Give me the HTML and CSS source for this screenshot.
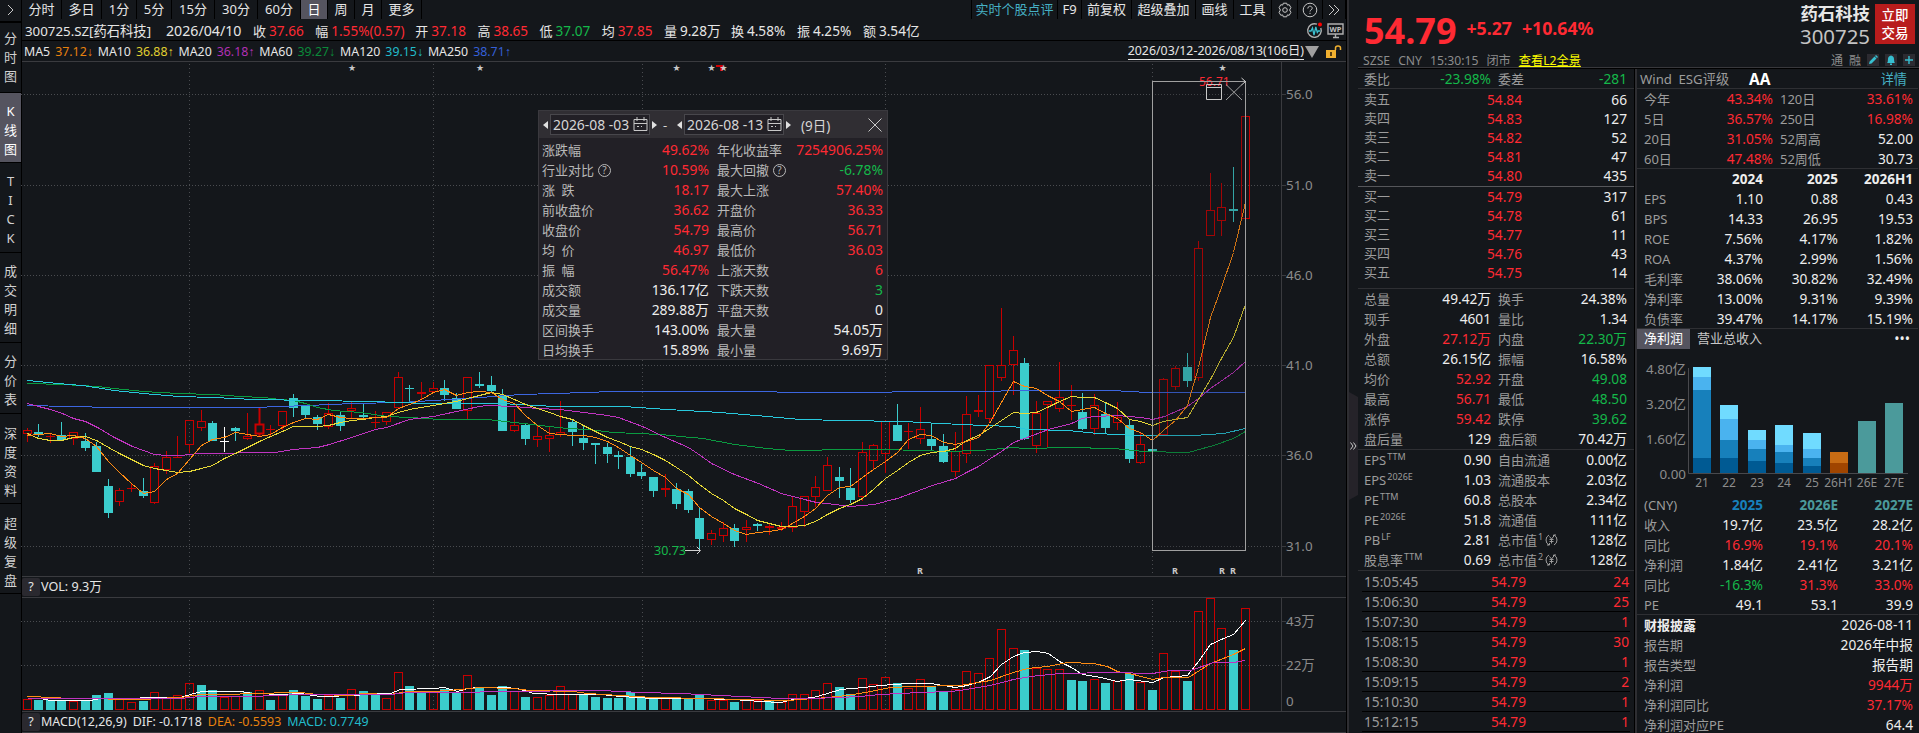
FILE: index.html
```html
<!DOCTYPE html>
<html lang="zh-CN">
<head>
    <meta charset="UTF-8">
    <title>药石科技 300725</title>
    <link rel="stylesheet" href="styles.css">
</head>
<body>
    <div class="app">
        <nav class="sidebar">
            <div class="side-toggle"><svg width="8" height="14" viewBox="0 0 8 14"><path d="M1 2l5 5-5 5"/></svg></div>
            <div class="side-tab">分<br>时<br>图</div>
            <div class="side-tab active">K<br>线<br>图</div>
            <div class="side-tab">T<br>I<br>C<br>K</div>
            <div class="side-tab">成<br>交<br>明<br>细</div>
            <div class="side-tab">分<br>价<br>表</div>
            <div class="side-tab">深<br>度<br>资<br>料</div>
            <div class="side-tab">超<br>级<br>复<br>盘</div>
        </nav>

        <main class="main">
            <div class="toolbar">
                <div class="periods">
                    <span class="w41">分时</span><span class="w40">多日</span><span class="w35">1分</span><span class="w35">5分</span><span class="w43">15分</span><span class="w43">30分</span><span class="w43">60分</span><span class="w27 active">日</span><span class="w27">周</span><span class="w27">月</span><span class="w40">更多</span>
                </div>
                <div class="tools">
                    <span class="w87 link">实时个股点评</span><span class="w24">F9</span><span class="w50">前复权</span><span class="w64">超级叠加</span><span class="w38">画线</span><span class="w38">工具</span>
                    <span class="w26"><svg width="16" height="16" viewBox="0 0 16 16"><path d="M6.300 1.200h3.400l.6 1.900 1.900-.4 1.700 2.900L12.600 8l1.300 2.400-1.700 2.900-1.900-.4-.6 1.900H6.300l-.6-1.900-1.900.4-1.700-2.900L3.400 8 2.100 5.600l1.700-2.900 1.900.4z"/><circle cx="8" cy="8" r="2.300"/></svg></span>
                    <span class="w25"><svg width="16" height="16" viewBox="0 0 16 16"><circle cx="8" cy="8" r="6.800"/><path d="M5.800 6.500c0-3 4.400-3 4.400-.2 0 1.500-2.200 1.600-2.200 3.200M8 10.800v1.200"/></svg></span>
                    <span class="w23"><svg width="12" height="12" viewBox="0 0 12 12"><path d="M1 1l5 5-5 5M6 1l5 5-5 5"/></svg></span>
                </div>
            </div>

            <div class="info">
                <span class="code">300725.SZ[药石科技]</span>
                <span class="date">2026/04/10</span>
                <span class="q">收<b class="up">37.66</b></span>
                <span class="q wide">幅<b class="up">1.55%(0.57)</b></span>
                <span class="q">开<b class="up">37.18</b></span>
                <span class="q">高<b class="up">38.65</b></span>
                <span class="q">低<b class="down">37.07</b></span>
                <span class="q">均<b class="up">37.85</b></span>
                <span class="q w67">量<b>9.28万</b></span>
                <span class="q w66">换<b>4.58%</b></span>
                <span class="q w66">振<b>4.25%</b></span>
                <span class="q">额<b>3.54亿</b></span>
                <div class="info-icons">
                    <svg width="17" height="17" viewBox="0 0 17 17"><path class="grey" d="M11 2.200A6.800 6.800 0 1 0 14.800 6"/><path class="pulse" d="M3 9h2l1.500-3 1.500 7 1.800-8 1.500 5.500 1-1.500h2"/><circle class="dot" cx="14" cy="2.500" r="2"/></svg>
                    <svg width="17" height="17" viewBox="0 0 17 17"><path class="grey" d="M1 2h15v10H1zM6 15.500h6M8.500 12v3"/><text x="8.500" y="10" text-anchor="middle">WP</text></svg>
                </div>
            </div>

            <div class="ma">
                <span>MA5</span><span class="c-orange">37.12<i>↓</i></span>
                <span>MA10</span><span class="c-yellow">36.88<i>↑</i></span>
                <span>MA20</span><span class="c-magenta">36.18<i>↑</i></span>
                <span>MA60</span><span class="c-green">39.27<i>↓</i></span>
                <span>MA120</span><span class="c-cyan">39.15<i>↓</i></span>
                <span>MA250</span><span class="c-blue">38.71<i>↑</i></span>
                <div class="range">
                    <u>2026/03/12-2026/08/13(106日)</u>
                    <svg width="14" height="14" viewBox="0 0 14 14"><path class="tri" d="M0 1h14L7 13z"/></svg>
                    <svg class="lock" width="16" height="14" viewBox="0 0 16 14"><path class="lock-body" d="M0 5h10v8H0z"/><path class="lock-ring" d="M9.500 5V3q0-2 2.500-2t2.500 2v2"/><path class="lock-hole" d="M4 7h2v4H4z"/></svg>
                </div>
            </div>

            <svg id="kchart" class="kchart" viewBox="21 62 1325 514"></svg>

            <div class="sub-head"><span class="help">?</span>VOL: 9.3万</div>
            <svg id="vchart" class="vchart" viewBox="21 598 1325 113"></svg>
            <div class="sub-head macd"><span class="help">?</span>MACD(12,26,9)<span>DIF: -0.1718</span><span class="c-orange">DEA: -0.5593</span><span class="c-cyan">MACD: 0.7749</span></div>

            <div class="popup">
                <div class="popup-head">
                    <em class="tri-l"></em>
                    <span class="date-box">2026-08 -03<svg width="15" height="15" viewBox="0 0 15 15"><path d="M1 2.500h13v11H1zM1 6.500h13M4 0v4M11 0v4M4 9.500h2M8 9.500h1"/></svg></span>
                    <em class="tri-r"></em>
                    <span class="dash">-</span>
                    <em class="tri-l"></em>
                    <span class="date-box">2026-08 -13<svg width="15" height="15" viewBox="0 0 15 15"><path d="M1 2.500h13v11H1zM1 6.500h13M4 0v4M11 0v4M4 9.500h2M8 9.500h1"/></svg></span>
                    <em class="tri-r"></em>
                    <span class="days">(9日)</span>
                    <svg class="close" width="14" height="14" viewBox="0 0 14 14"><path d="M.5.5l13 13M13.500.5l-13 13"/></svg>
                </div>
                <div class="stats">
                    <span>涨跌幅</span><b class="up">49.62%</b><span>年化收益率</span><b class="up">7254906.25%</b>
                    <span>行业对比<i class="tip">?</i></span><b class="up">10.59%</b><span>最大回撤<i class="tip">?</i></span><b class="down">-6.78%</b>
                    <span>涨&ensp;跌</span><b class="up">18.17</b><span>最大上涨</span><b class="up">57.40%</b>
                    <span>前收盘价</span><b class="up">36.62</b><span>开盘价</span><b class="up">36.33</b>
                    <span>收盘价</span><b class="up">54.79</b><span>最高价</span><b class="up">56.71</b>
                    <span>均&ensp;价</span><b class="up">46.97</b><span>最低价</span><b class="up">36.03</b>
                    <span>振&ensp;幅</span><b class="up">56.47%</b><span>上涨天数</span><b class="up">6</b>
                    <span>成交额</span><b>136.17亿</b><span>下跌天数</span><b class="down">3</b>
                    <span>成交量</span><b>289.88万</b><span>平盘天数</span><b>0</b>
                    <span>区间换手</span><b>143.00%</b><span>最大量</span><b>54.05万</b>
                    <span>日均换手</span><b>15.89%</b><span>最小量</span><b>9.69万</b>
                </div>
            </div>
        </main>

        <div class="gutter"><div class="handle"><svg width="7" height="8" viewBox="0 0 7 8"><path d="M.5.5L3 4 .5 7.500M3.500.5L6 4 3.500 7.500"/></svg></div></div>

        <aside class="quote">
            <header class="quote-head">
                <div class="head-left">
                    <div class="price"><strong>54.79</strong><b>+5.27</b><b>+10.64%</b></div>
                    <div class="market"><span>SZSE</span><span>CNY</span><span>15:30:15</span><span>闭市</span><u>查看L2全景</u></div>
                </div>
                <div class="head-right">
                    <div class="name-row">
                        <div class="name"><strong>药石科技</strong><span>300725</span></div>
                        <div class="trade">立即<br>交易</div>
                    </div>
                    <div class="badges">
                        <span>通</span><span>融</span>
                        <svg width="12" height="12" viewBox="0 0 12 12"><path d="M2 10l.6-2.500L7.500 2.600l2 2L4.500 9.500zM8 2l1-1 2 2-1 1z"/></svg>
                        <svg width="12" height="12" viewBox="0 0 12 12"><path d="M2 9q1-1 1-4 0-3 3-3.500Q9 2 9 5q0 3 1 4zM5 9.500h2v1.500H5z"/></svg>
                        <svg width="12" height="12" viewBox="0 0 12 12"><path d="M5.300 2h1.400v3.300H10v1.400H6.700V10H5.300V6.700H2V5.300h3.300z"/></svg>
                    </div>
                </div>
            </header>

            <div class="panels">
                <section class="panel depth">
                    <div class="pairs ratio"><span>委比</span><b class="down">-23.98%</b><span>委差</span><b class="down">-281</b></div>
                    <div class="book sell">
                        <span>卖五</span><b class="up">54.84</b><b>66</b>
                        <span>卖四</span><b class="up">54.83</b><b>127</b>
                        <span>卖三</span><b class="up">54.82</b><b>52</b>
                        <span>卖二</span><b class="up">54.81</b><b>47</b>
                        <span>卖一</span><b class="up">54.80</b><b>435</b>
                    </div>
                    <div class="book buy">
                        <span>买一</span><b class="up">54.79</b><b>317</b>
                        <span>买二</span><b class="up">54.78</b><b>61</b>
                        <span>买三</span><b class="up">54.77</b><b>11</b>
                        <span>买四</span><b class="up">54.76</b><b>43</b>
                        <span>买五</span><b class="up">54.75</b><b>14</b>
                    </div>
                    <div class="pairs">
                        <span>总量</span><b>49.42万</b><span>换手</span><b>24.38%</b>
                        <span>现手</span><b>4601</b><span>量比</span><b>1.34</b>
                        <span>外盘</span><b class="up">27.12万</b><span>内盘</span><b class="down">22.30万</b>
                        <span>总额</span><b>26.15亿</b><span>振幅</span><b>16.58%</b>
                        <span>均价</span><b class="up">52.92</b><span>开盘</span><b class="down">49.08</b>
                        <span>最高</span><b class="up">56.71</b><span>最低</span><b class="down">48.50</b>
                        <span>涨停</span><b class="up">59.42</b><span>跌停</span><b class="down">39.62</b>
                        <span>盘后量</span><b>129</b><span>盘后额</span><b>70.42万</b>
                    </div>
                    <div class="pairs">
                        <span>EPS<sup>TTM</sup></span><b>0.90</b><span>自由流通</span><b>0.00亿</b>
                        <span>EPS<sup>2026E</sup></span><b>1.03</b><span>流通股本</span><b>2.03亿</b>
                        <span>PE<sup>TTM</sup></span><b>60.8</b><span>总股本</span><b>2.34亿</b>
                        <span>PE<sup>2026E</sup></span><b>51.8</b><span>流通值</span><b>111亿</b>
                        <span>PB<sup>LF</sup></span><b>2.81</b><span>总市值<sup>1</sup><svg width="13" height="12" viewBox="0 0 13 12"><path d="M4 1Q1 2.500 1 6t3 5M2 11h2.500V9M9 11q3-1.500 3-5T9 1M11 1H8.500v2M4.500 2.500l2 2.500 2-2.500M6.500 5v4.500M4.500 5.500h4M4.500 7.500h4"/></svg></span><b>128亿</b>
                        <span>股息率<sup>TTM</sup></span><b>0.69</b><span>总市值<sup>2</sup><svg width="13" height="12" viewBox="0 0 13 12"><path d="M4 1Q1 2.500 1 6t3 5M2 11h2.500V9M9 11q3-1.500 3-5T9 1M11 1H8.500v2M4.500 2.500l2 2.500 2-2.500M6.500 5v4.500M4.500 5.500h4M4.500 7.500h4"/></svg></span><b>128亿</b>
                    </div>
                    <div class="ticks">
                        <div><span>15:05:45</span><b>54.79</b><b>24</b></div>
                        <div><span>15:06:30</span><b>54.79</b><b>25</b></div>
                        <div><span>15:07:30</span><b>54.79</b><b>1</b></div>
                        <div class="same"><span>15:08:15</span><b>54.79</b><b>30</b></div>
                        <div><span>15:08:30</span><b>54.79</b><b>1</b></div>
                        <div><span>15:09:15</span><b>54.79</b><b>2</b></div>
                        <div><span>15:10:30</span><b>54.79</b><b>1</b></div>
                        <div><span>15:12:15</span><b>54.79</b><b>1</b></div>
                    </div>
                </section>

                <section class="panel finance">
                    <div class="esg"><span>Wind&ensp;ESG评级</span><strong>AA</strong><a>详情</a></div>
                    <div class="pairs returns">
                        <span>今年</span><b class="up">43.34%</b><span>120日</span><b class="up">33.61%</b>
                        <span>5日</span><b class="up">36.57%</b><span>250日</span><b class="up">16.98%</b>
                        <span>20日</span><b class="up">31.05%</b><span>52周高</span><b>52.00</b>
                        <span>60日</span><b class="up">47.48%</b><span>52周低</span><b>30.73</b>
                    </div>
                    <div class="fin ratios">
                        <span></span><strong>2024</strong><strong>2025</strong><strong>2026H1</strong>
                        <span>EPS</span><b>1.10</b><b>0.88</b><b>0.43</b>
                        <span>BPS</span><b>14.33</b><b>26.95</b><b>19.53</b>
                        <span>ROE</span><b>7.56%</b><b>4.17%</b><b>1.82%</b>
                        <span>ROA</span><b>4.37%</b><b>2.99%</b><b>1.56%</b>
                        <span>毛利率</span><b>38.06%</b><b>30.82%</b><b>32.49%</b>
                        <span>净利率</span><b>13.00%</b><b>9.31%</b><b>9.39%</b>
                        <span>负债率</span><b>39.47%</b><b>14.17%</b><b>15.19%</b>
                    </div>
                    <div class="tabs"><span class="active">净利润</span><span>营业总收入</span><em>•••</em></div>
                    <svg id="profit" class="profit" viewBox="1637 349 281 146"></svg>
                    <div class="fin forecast">
                        <span>(CNY)</span><strong class="y1">2025</strong><strong class="y2">2026E</strong><strong class="y2">2027E</strong>
                        <span>收入</span><b>19.7亿</b><b>23.5亿</b><b>28.2亿</b>
                        <span>同比</span><b class="up">16.9%</b><b class="up">19.1%</b><b class="up">20.1%</b>
                        <span>净利润</span><b>1.84亿</b><b>2.41亿</b><b>3.21亿</b>
                        <span>同比</span><b class="down">-16.3%</b><b class="up">31.3%</b><b class="up">33.0%</b>
                        <span>PE</span><b>49.1</b><b>53.1</b><b>39.9</b>
                    </div>
                    <div class="report">
                        <strong>财报披露</strong><b>2026-08-11</b>
                        <span>报告期</span><b>2026年中报</b>
                        <span>报告类型</span><b>报告期</b>
                        <span>净利润</span><b class="up">9944万</b>
                        <span>净利润同比</span><b class="up">37.17%</b>
                        <span>净利润对应PE</span><b>64.4</b>
                    </div>
                </section>
            </div>
        </aside>
    </div>
    <script src="chart.js"></script>
</body>
</html>
```
FILE: styles.css
```css
* {
    box-sizing: border-box;
}
body {
    margin: 0;
    background: #14171b;
    color: #e6e6e6;
    font-family: "Noto Sans", "Noto Sans CJK SC", sans-serif;
    font-size: 13px;
    overflow: hidden;
}
b, i, em {
    font-weight: normal;
    font-style: normal;
}
svg {
    display: block;
    fill: none;
    stroke: #c8c8c8;
}
.up { color: #ff2a33; }
.down { color: #14b84a; }
.c-orange { color: #e8820e; }
.c-yellow { color: #e0d030; }
.c-magenta { color: #b030b4; }
.c-green { color: #0b8a3a; }
.c-cyan { color: #22bccb; }
.c-blue { color: #3560d8; }

.app {
    display: flex;
    width: 1919px;
    height: 733px;
}

/* left tabs */
.sidebar {
    width: 22px;
    border-right: 1px solid #000;
    text-align: center;
    line-height: 19px;
    color: #d2d2d2;
}
.side-toggle {
    height: 23px;
    padding: 3px 0 0 7px;
    border-bottom: 2px solid #000;
}
.side-tab {
    padding: 6px 0 12px;
    height: 70px;
    border-bottom: 1px solid #000;
    line-height: 19px;
}
.side-tab:nth-child(n+4) {
    height: 90px;
    padding-top: 9px;
}
.side-tab:nth-child(6) {
    height: 71px;
}
.side-tab:nth-child(n+7) {
    padding-top: 10px;
}
.side-tab.active {
    background: #55545f;
    color: #fff;
    padding-top: 9px;
}

/* main column */
.main {
    position: relative;
    width: 1325px;
    display: flex;
    flex-direction: column;
    border-right: 1px solid #000;
}
.toolbar {
    display: flex;
    justify-content: space-between;
    height: 19px;
}
.periods, .tools {
    display: flex;
}
.periods span, .tools span {
    display: flex;
    align-items: center;
    justify-content: center;
    height: 19px;
    line-height: 19px;
    border-right: 1px solid #000;
}
.tools span:first-child {
    border-left: 1px solid #000;
}
.tools .link { color: #46b0c4; }
.periods .active {
    background: #55545f;
    color: #fff;
}
.w23 { width: 23px; }
.w24 { width: 24px; }
.w25 { width: 25px; }
.w26 { width: 26px; }
.w27 { width: 27px; }
.w35 { width: 35px; }
.w38 { width: 38px; }
.w40 { width: 40px; }
.w41 { width: 40px; }
.w43 { width: 43px; }
.w50 { width: 50px; }
.w64 { width: 64px; }
.w87 { width: 87px; }

.info {
    display: flex;
    height: 22px;
    padding-left: 3px;
    line-height: 24px;
    border-bottom: 1px solid #000;
    white-space: nowrap;
}
.info .code { width: 141px; font-size: 13.3px; }
.info .date { width: 87px; font-size: 14.2px; }
.info .q { width: 62.2px; }
.info .q.wide { width: 100px; }
.info .q.w67 { width: 67px; }
.info .q.w66 { width: 66px; }
.info .q b {
    margin-left: 3px;
    font-size: 13.6px;
}
.info-icons {
    display: flex;
    gap: 4px;
    margin-left: auto;
    padding: 3px 2px 0 0;
}
.info-icons .grey { stroke: #b0b0b0; stroke-width: 1.4; }
.info-icons .pulse { stroke: #3cc0d0; stroke-width: 1.3; }
.info-icons .dot { fill: #f00; stroke: none; }
.info-icons text {
    fill: #c0c0c0;
    stroke: none;
    font-size: 7.5px;
    font-weight: bold;
}

.ma {
    display: flex;
    align-items: center;
    height: 21px;
    padding: 1px 0 0 2px;
    font-size: 12.35px;
    line-height: 20px;
    border-bottom: 1px solid #3a3b3f;
}
.ma > span { margin-right: 5px; }
.ma i {
    display: inline-block;
    width: 6px;
    font-family: "Liberation Sans", sans-serif;
}
.ma .range {
    display: flex;
    align-items: center;
    margin-left: auto;
    padding-right: 4px;
}
.ma u {
    font-size: 12.35px;
    line-height: 16px;
    text-decoration: none;
    border-bottom: 1px solid #e6e6e6;
    margin-right: 1px;
}
.tri { fill: #a0a0a0; stroke: none; }
.lock { margin-left: 7px; }
.lock-body { fill: #f0b030; stroke: none; }
.lock-ring { stroke: #f0b030; stroke-width: 1.5; }
.lock-hole { fill: #5a4010; stroke: none; }

.kchart { width: 1325px; height: 514px; margin-left: -1px; }
.vchart { width: 1325px; height: 113px; margin-left: -1px; }
.kchart text, .vchart text, .profit text {
    stroke: none;
    fill: #8c8c8c;
    font-size: 13.4px;
}
.kchart text.mark { fill: #c8c8c8; font-size: 9px; font-weight: bold; }
.kchart text.star { fill: #c8c8c8; font-size: 9px; font-family: "DejaVu Sans", sans-serif; }
.kchart text.high { fill: #ff2a33; font-size: 12px; }
.kchart text.low { fill: #14b84a; font-size: 12.5px; }
.sub-head {
    display: flex;
    align-items: center;
    height: 22px;
    border-top: 1px solid #3a3b3f;
    border-bottom: 1px solid #3a3b3f;
    font-size: 12.6px;
    line-height: 20px;
}
.macd { font-size: 12.45px; }
.sub-head > span:not(.help) { margin-left: 6px; }
.help {
    width: 18px;
    height: 18px;
    margin: 0 1px 0 0;
    line-height: 18px;
    background: #2a292f;
    text-align: center;
    border-radius: 2px;
}

/* interval statistics window */
.popup {
    position: absolute;
    left: 516px;
    top: 110px;
    width: 350px;
    height: 250px;
    background: #222026;
    border: 1px solid #3a393e;
}
.popup-head {
    display: flex;
    align-items: center;
    height: 27px;
    padding-left: 4px;
    background: #302e33;
    color: #d6d6d6;
}
.date-box {
    display: flex;
    align-items: center;
    width: 100px;
    height: 21px;
    margin: 0 2px;
    padding-left: 2px;
    border: 1px solid #48474c;
    background: #222026;
    font-size: 13.9px;
    white-space: nowrap;
}
.date-box svg { margin-left: auto; margin-right: 1px; }
.tri-l, .tri-r {
    border: 4px solid transparent;
    border-width: 4px 5px;
}
.tri-l { border-right-color: #e0e0e0; border-left-width: 0; }
.tri-r { border-left-color: #e0e0e0; border-right-width: 0; }
.dash { width: 20px; padding-left: 6px; }
.days { margin-left: 10px; font-size: 13.5px; }
.close { margin-left: auto; margin-right: 5px; }
.stats {
    display: grid;
    grid-template-columns: 90px 77px 67px 1fr;
    grid-auto-rows: 20px;
    padding: 2px 4px 0 3px;
    line-height: 20px;
    color: #b8b8b8;
    white-space: nowrap;
}
.stats b {
    font-size: 13.9px;
    text-align: right;
}
.stats span:nth-child(4n+3) { padding-left: 8px; }
.stats b:not(.up):not(.down) { color: #eee; }
.tip {
    display: inline-block;
    width: 13px;
    height: 13px;
    margin-left: 4px;
    border: 1px solid #b8b8b8;
    border-radius: 50%;
    font-size: 10px;
    line-height: 11px;
    text-align: center;
    vertical-align: 1px;
}

/* strip with the collapse handle */
.gutter {
    width: 11px;
    padding-top: 392px;
    border-left: 2px solid #2e2e32;
}
.handle {
    display: flex;
    align-items: center;
    justify-content: center;
    height: 108px;
    background: #252329;
    clip-path: polygon(0 0, 100% 5px, 100% 103px, 0 100%);
}

/* quote side */
.quote {
    width: 561px;
}
.quote-head {
    display: flex;
    justify-content: space-between;
    height: 69px;
    border-bottom: 1px solid #000;
    box-shadow: inset 0 -1px #38383c;
}
.price {
    display: flex;
    align-items: center;
    height: 52px;
    padding: 9px 0 0 6px;
    color: #ff2a33;
}
.price strong { font-size: 36px; line-height: 40px; }
.price b { margin: -5px 0 0 10px; font-size: 17.7px; font-weight: bold; }
.market {
    display: flex;
    gap: 8px;
    padding-left: 5px;
    color: #8c8c8c;
    font-size: 12.2px;
    line-height: 17px;
}
.market u { color: #ff0; }
.name-row {
    display: flex;
    justify-content: flex-end;
    height: 51px;
    padding: 3px 4px 0 0;
}
.name {
    display: flex;
    flex-direction: column;
    align-items: flex-end;
    margin-right: 5px;
}
.name strong { font-size: 17.4px; line-height: 21px; }
.name span { font-size: 20.4px; line-height: 25px; color: #c4c4c4; }
.trade {
    width: 40px;
    height: 40px;
    margin-top: 1px;
    padding-top: 2px;
    background: #b81c1c;
    color: #fff;
    font-size: 13.5px;
    font-weight: 500;
    line-height: 18px;
    text-align: center;
}
.badges {
    display: flex;
    justify-content: flex-end;
    gap: 6px;
    padding: 3px 4px 0 0;
    font-size: 12px;
    line-height: 14px;
    color: #8c8c8c;
}
.badges svg { background: #2c2b31; fill: #36bfd0; stroke: none; }

.panels {
    display: flex;
    height: 664px;
}
.panel {
    line-height: 20px;
    color: #9c9c9c;
    white-space: nowrap;
}
.panel b {
    font-size: 13.7px;
    text-align: right;
}
.panel b:not(.up):not(.down) { color: #eee; }
.depth {
    width: 277px;
    border-right: 1px solid #000;
}
.pairs, .book {
    display: grid;
    grid-auto-rows: 20px;
    padding: 0 7px 0 6px;
    border-bottom: 1px solid #2e2f33;
}
.pairs { grid-template-columns: 60px 67px 66px 1fr; }
.pairs span:nth-child(4n+3) { padding-left: 7px; }
.pairs svg {
    display: inline-block;
    margin-left: 2px;
    stroke: #9c9c9c;
    vertical-align: -1px;
}
.ratio { grid-auto-rows: 19px; }
.book {
    grid-template-columns: 60px 98px 1fr;
    grid-auto-rows: 19px;
    line-height: 19px;
}
.sell { padding-top: 1px; height: 98px; border-color: #55565a; }
.buy { height: 102px; }
.panel sup {
    font-size: 9px;
    line-height: 0;
    vertical-align: 5px;
    margin-left: 1px;
}
.ticks {
    margin: 1px 4px 0 4px;
}
.ticks div {
    display: grid;
    grid-template-columns: 60px 102px 1fr;
    height: 20px;
    padding: 0 1px 0 2px;
    line-height: 20px;
    font-size: 13.7px;
    border-bottom: 1px solid #000;
}
.ticks .same { border-color: transparent; }
.panel .ticks b:not(.up) { color: #ff2a33; }

.finance {
    width: 284px;
    padding-right: 1px;
    border-left: 2px solid #2e2e32;
}
.esg {
    display: flex;
    align-items: center;
    height: 20px;
    padding: 0 11px 0 3px;
    border-bottom: 1px solid #2e2f33;
    font-size: 13.2px;
}
.esg strong { margin-left: 20px; color: #fff; font-size: 15.5px; }
.esg a { margin-left: auto; color: #46b0c4; }
.returns {
    grid-template-columns: 60px 69px 60px 1fr;
    height: 80px;
    padding: 0 5px 0 7px;
}
.fin {
    display: grid;
    grid-template-columns: 44px 75px 75px 1fr;
    grid-auto-rows: 20px;
    padding: 0 5px 0 7px;
    border-bottom: 1px solid #2e2f33;
}
.ratios { height: 160px; }
.forecast { height: 120px; }
.fin strong {
    color: #eee;
    font-size: 13.5px;
    text-align: right;
}
.fin .y1 { color: #1780bb; }
.fin .y2 { color: #4b9a9b; }
.tabs {
    display: flex;
    height: 20px;
    line-height: 19px;
}
.tabs span { padding: 0 7px; color: #c8c8c8; }
.tabs .active { background: #55545f; color: #fff; }
.tabs em { margin-left: auto; padding-right: 8px; color: #eee; font-size: 14px; }
.profit { width: 281px; height: 146px; }
.report {
    display: grid;
    grid-template-columns: 110px 1fr;
    grid-auto-rows: 20px;
    padding: 0 5px 0 7px;
}
.report strong { color: #eee; }
```
FILE: chart.js
```js
const NS = "http://www.w3.org/2000/svg";
const RED = "#c80000", TEAL = "#3bcccc";

function add(svg, tag, attrs, text) {
    const el = document.createElementNS(NS, tag);
    for (const k in attrs) el.setAttribute(k, attrs[k]);
    if (text !== undefined) el.textContent = text;
    svg.appendChild(el);
}

// type, high, top, bottom, low, volume top
const days = `r 428 430 434 442 699|g 424 432 435 437 700|r 433 436 437 443 700|g 422 435 440 440 700|r 432 432 439 445 701
g 433 441 448 451 700|g 442 446 472 472 695|g 479 486 513 518 693|r 488 490 502 506 699|r 483 488 489 492 702
g 478 491 496 498 701|r 463 466 503 504 692|r 451 457 470 474 697|r 436 457 458 458 695|r 420 420 445 453 683
r 410 421 428 431 685|g 421 423 441 441 690|w 427 441 442 452 697|g 427 428 431 441 696|r 413 436 439 440 692
s 408 424 434 436 690|r 425 429 430 436 700|r 411 411 426 430 695|g 394 398 408 417 690|g 405 406 415 418 696
g 415 417 424 430 699|r 403 413 427 429 695|g 411 415 426 431 698|r 401 408 411 419 689|g 404 415 417 418 691
r 411 422 423 428 695|r 412 412 422 425 698|r 372 377 408 408 672|g 385 388 389 402 686|r 382 392 394 400 692
r 382 388 392 393 691|g 380 388 395 401 689|g 393 398 409 409 693|r 377 377 411 419 675|g 372 384 386 388 687
g 376 385 391 392 695|g 389 395 431 431 686|r 409 425 431 432 691|g 424 425 439 445 697|r 426 436 440 447 697
r 426 435 439 452 695|r 401 432 435 437 686|g 419 422 432 446 694|g 425 438 443 450 695|g 443 443 445 464 697
g 443 447 454 463 698|g 451 455 457 469 698|g 446 457 474 477 692|g 464 472 476 479 698|g 477 477 491 497 698
r 474 488 490 497 698|g 483 489 504 509 699|g 489 491 510 513 698|g 508 518 539 550 694|r 530 533 540 545 700
r 522 528 536 542 700|g 524 528 541 547 702|r 520 527 530 542 700|g 523 524 526 531 700|r 524 526 528 535 701
r 522 527 529 531 702|r 497 506 528 532 694|r 496 496 512 527 694|r 476 487 497 507 690|r 457 465 491 491 683
g 467 477 481 498 687|g 468 488 500 503 694|r 442 452 497 501 678|r 444 445 461 469 684|r 420 421 454 473 677
g 404 425 441 441 683|r 423 431 432 449 688|r 407 429 439 444 679|g 423 439 446 450 687|g 434 446 462 463 692
r 432 451 472 477 689|r 396 414 454 463 671|r 395 410 412 417 673|r 365 365 419 423 658|r 308 365 378 381 629
r 336 350 365 395 648|g 358 363 439 440 650|r 401 413 446 453 668|r 401 401 405 447 669|r 362 397 409 412 669
r 385 405 406 420 680|g 393 412 429 430 681|r 394 405 429 435 679|g 402 414 428 434 683|r 402 417 423 430 681
g 420 425 459 463 674|r 432 444 463 464 682|g 449 449 451 452 690|r 378 379 435 435 653|r 366 368 387 390 671
g 353 367 381 387 681|r 241 248 378 381 611|r 173 210 236 236 598|r 183 207 221 236 628|g 167 209 211 222 650
r 116 116 219 219 608`.split(/[|\n]/).map(s => s.split(" ").map((v, i) => i ? +v : v));

// days whose volume bar has the opposite colour of the candle
const flipped = [2, 15, 18, 19, 21, 30, 34, 47, 63, 64, 90];

const dayX = i => Math.floor(27 + 11.6 * i);

const ma5 = [435,434,433,436,435,438,446,461,472,483,493,491,479,473,459,445,439,437,432,434,436,434,427,422,418,419,414,417,418,418,417,417,408,404,399,392,389,395,392,391,392,399,403,415,425,433,434,435,435,437,441,447,455,462,470,477,488,494,507,516,523,530,534,532,531,529,523,516,508,495,487,486,477,469,461,452,439,434,435,442,444,441,437,423,402,381,386,388,395,401,411,409,407,413,418,428,432,440,430,420,405,367,317,287,252,202];
const ma10 = [433,438,440,440,437,436,440,447,453,459,465,468,470,472,471,468,465,458,453,447,441,436,431,426,426,426,425,422,420,419,417,416,412,409,407,405,403,401,398,395,392,394,399,404,408,412,416,419,425,431,437,441,446,449,454,460,467,475,484,493,500,508,514,520,523,526,526,525,521,514,508,504,498,489,478,470,462,455,452,451,448,440,435,428,420,412,413,412,407,401,396,397,397,402,408,419,421,425,421,419,417,399,379,358,337,304];
const byDay = a => a.map((y, i) => dayX(i) + "," + y).join(" ");

const ma20 = "27,403 38,406 50,409 62,413 73,418 85,421 97,427 114,437 132,446 143,450 154,454 166,455 180,455 190,454 197,453 275,452 293,449 317,447 329,444 351,437 375,429 386,427 409,419 433,416 456,411 479,406 487,405 514,406 537,408 560,409 583,412 607,415 618,417 642,426 665,437 688,447 700,455 711,463 734,474 758,483 781,493 804,499 816,502 827,503 850,506 874,504 885,501 897,498 932,485 955,478 966,472 978,466 990,458 1001,451 1013,442 1024,438 1048,429 1071,423 1082,418 1094,416 1117,415 1140,417 1152,419 1164,416 1187,406 1198,398 1210,388 1233,372 1245,361";
const ma60 = "27,383 63,384 97,386 114,388 143,391 178,393 212,394 240,396 263,397 280,399 293,400 305,403 317,407 333,410 360,412 387,416 410,417 440,419 487,419 514,422 540,425 567,428 587,429 613,432 660,434 680,436 703,438 734,444 767,448 790,450 817,450 827,449 880,449 923,450 943,451 980,450 1013,447 1024,448 1040,448 1053,447 1087,447 1093,448 1113,448 1143,451 1188,452 1213,445 1233,438 1245,431";
const ma120 = "27,380 57,383 82,385 114,390 143,393 178,396 213,397 253,399 313,400 370,401 427,403 500,403 555,406 623,406 667,409 720,412 767,416 800,419 843,420 903,421 940,423 983,425 1013,426 1027,429 1067,430 1097,433 1133,435 1193,435 1223,433 1245,428";
const ma250 = "27,405 68,406 114,407 253,407 307,405 353,403 400,402 433,400 480,397 520,394 555,393 613,391 764,391 788,392 880,392 903,391 995,391 1007,390 1112,390 1147,392 1245,392";

const vma5 = "27,698 40,698 50,700 90,700 100,698 180,697 190,694 201,691 240,691 253,693 283,694 300,693 320,696 357,695 367,693 390,693 400,689 433,688 444,687 457,691 467,688 479,687 503,687 517,688 533,693 560,694 600,694 620,696 653,698 693,698 733,699 760,701 780,702 793,699 813,697 827,693 840,689 863,687 880,685 907,683 930,683 943,685 955,687 967,685 980,681 990,676 1001,664 1013,656 1024,652 1037,651 1048,653 1059,661 1071,667 1082,674 1100,677 1117,681 1129,679 1152,682 1164,677 1187,675 1198,661 1210,644 1223,638 1233,634 1245,620";
const vma10 = "27,696 53,697 67,698 147,699 153,698 180,697 200,694 233,694 247,693 300,692 317,694 350,695 363,693 390,694 407,691 433,691 460,689 480,687 513,688 530,690 573,691 587,693 620,695 653,697 707,698 740,699 787,700 800,699 827,697 847,695 870,691 890,687 913,686 960,685 990,680 1013,672 1027,668 1047,666 1067,662 1093,663 1107,666 1117,671 1133,674 1152,679 1164,677 1188,677 1210,663 1233,654 1245,648";
const vma20 = "27,698 180,698 200,696 250,696 300,694 390,694 407,692 460,692 500,691 600,690 640,692 680,693 720,695 780,698 813,698 860,696 880,694 920,692 950,691 960,690 990,685 1013,679 1030,676 1060,673 1113,672 1152,673 1170,670 1190,670 1213,662 1233,662 1245,660";

function line(svg, points, color) {
    add(svg, "polyline", { points, stroke: color, "shape-rendering": "crispEdges", transform: "translate(.5 .5)" });
}

function grid(svg, top, bottom, rows) {
    rows.forEach(([y, label]) => {
        add(svg, "path", { d: `M21 ${y}H1281`, stroke: "#4a4c50", "stroke-dasharray": "1 2" });
        add(svg, "path", { d: `M1282 ${y}h4`, stroke: "#3a3b3f" });
        add(svg, "text", { x: 1286, y: y + 4.5 }, label);
    });
    [189.5, 433.5, 642.5, 885.5, 1152.5].forEach(x =>
        add(svg, "path", { d: `M${x} ${top + 2}V${bottom}`, stroke: "#4a4c50", "stroke-dasharray": "1 3" }));
    add(svg, "path", { d: `M1281.5 ${top}V${bottom}`, stroke: "#3a3b3f" });
}

// candles
const k = document.getElementById("kchart");
grid(k, 62, 576, [[94.5, "56.0"], [185.5, "51.0"], [275.5, "46.0"], [365.5, "41.0"], [455.5, "36.0"], [546.5, "31.0"]]);
days.forEach(([type, high, top, bottom, low], i) => {
    const x = dayX(i);
    const color = type === "g" ? TEAL : type === "w" ? "#fff" : RED;
    const w = type === "s" ? 2 : 1;
    add(k, "path", { d: `M${x + .5} ${high}V${top}M${x + .5} ${bottom}V${low}`, stroke: color, "stroke-width": w });
    if (type === "g" || bottom - top < 2) {
        add(k, "rect", { x: x - 4, y: top, width: 9, height: bottom - top, fill: color, stroke: "none" });
    } else {
        add(k, "rect", { x: x - 3.5, y: top + .5, width: 8, height: bottom - top - 1, stroke: color, "stroke-width": w });
    }
});
line(k, ma250, "#3c66e0");
line(k, ma60, "#0a9a40");
line(k, ma120, "#28c8dc");
line(k, ma20, "#c034c0");
line(k, byDay(ma10), "#e6d837");
line(k, byDay(ma5), "#ff8c14");

// selected interval
add(k, "rect", { x: 1152, y: 81, width: 94, height: 469, fill: "#16181a", "fill-opacity": .22, stroke: "none" });
add(k, "text", { x: 1199, y: 86, class: "high" }, "56.71");
add(k, "rect", { x: 1152.5, y: 81.5, width: 93, height: 469, stroke: "#a0a0a0" });
add(k, "path", { d: "M1241.500 78l4 3.500-4 3.500", stroke: "#d0d0d0" });
add(k, "path", { d: "M1206.500 84.500h15v15h-15zM1206.500 87.500h15", stroke: "#c8c8c8" });
add(k, "path", { d: "M1226 84.500l16 15.500M1242 84.500l-16 15.500", stroke: "#a0a0a0" });
add(k, "text", { x: 654, y: 555, class: "low" }, "30.73");
add(k, "path", { d: "M685 550.500h15M697 547l3.500 3.500-3.500 3.500", stroke: "#d0d0d0" });
add(k, "path", { d: "M716 65h7v6h-3v-4h-4z", fill: "#d00000", stroke: "none" });
[352, 480, 676.5, 711.5, 723.5, 1222.5].forEach(x => add(k, "text", { x, y: 71, class: "star", "text-anchor": "middle" }, "★"));
[920, 1175, 1222, 1233].forEach(x => add(k, "text", { x, y: 574, class: "mark", "text-anchor": "middle" }, "R"));

// volume
const v = document.getElementById("vchart");
grid(v, 598, 711, [[621.5, "43万"], [665.5, "22万"]]);
add(v, "text", { x: 1286, y: 706 }, "0");
days.forEach((d, i) => {
    const x = dayX(i), y = d[5];
    if ((d[0] === "g") !== flipped.includes(i)) {
        add(v, "rect", { x: x - 4, y, width: 9, height: 710 - y, fill: TEAL, stroke: "none" });
    } else {
        add(v, "rect", { x: x - 3.5, y: y + .5, width: 8, height: 709 - y, stroke: RED });
    }
});
line(v, vma5, "#fff");
line(v, vma10, "#ff8c14");
line(v, vma20, "#c034c0");

// yearly profit, segment edges from top to bottom
const p = document.getElementById("profit");
const blues = ["#70dbff", "#4ab3ef", "#1780bb", "#005a93"];
[
    [1693, "21", [367, 377, 390, 458], blues],
    [1720, "22", [405, 419, 440, 458], blues],
    [1748, "23", [430, 440, 449, 461], blues],
    [1775, "24", [425, 445, 452, 463], blues],
    [1803, "25", [433, 449, 458, 466], blues],
    [1830, "26H1", [452, 463], ["#c86c14", "#a04500"]],
    [1858, "26E", [421], ["#4b9a9b"]],
    [1885, "27E", [403], ["#4b9a9b"]]
].forEach(([x, label, tops, colors]) => {
    tops.forEach((y, i) => add(p, "rect", { x, y, width: 18, height: (tops[i + 1] || 473) - y, fill: colors[i], stroke: "none" }));
    add(p, "text", { x: x + 9, y: 487, "text-anchor": "middle", style: "font-size:12px" }, label);
});
[["4.80亿", 369], ["3.20亿", 404], ["1.60亿", 439], ["0.00", 474]].forEach(([t, y]) =>
    add(p, "text", { x: 1686, y: y + 5, "text-anchor": "end" }, t));
add(p, "path", { d: "M1688.500 368V473.500H1908", stroke: "#48494d" });
```
